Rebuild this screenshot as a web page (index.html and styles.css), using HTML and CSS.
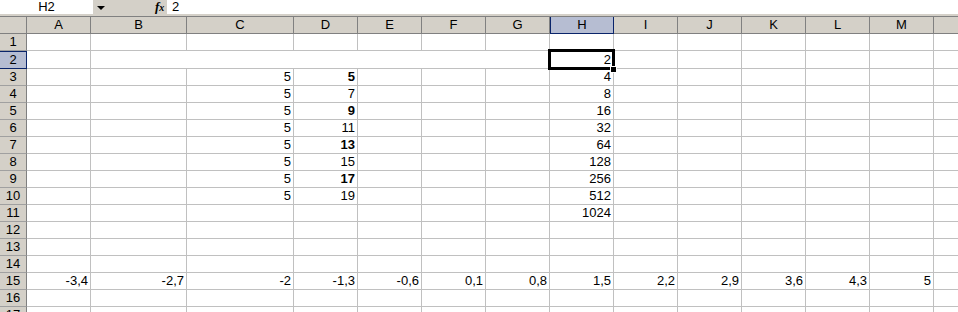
FILE: index.html
```html
<!DOCTYPE html>
<html lang="fr">
<head>
    <meta charset="UTF-8">
    <title>Feuil1</title>
    <link rel="stylesheet" href="styles.css">
</head>
<body>

    <!-- Barre de formule -->
    <div class="formula-bar">
        <div class="name-box">H2</div>
        <div class="name-drop"><span class="arrow"></span></div>
        <div class="fx">f<span>x</span></div>
        <div class="formula">2</div>
    </div>

    <table class="grid">
        <colgroup>
            <col class="c-hdr">
            <col class="c-std">
            <col class="c-b">
            <col class="c-c">
            <col class="c-std"><col class="c-std"><col class="c-std"><col class="c-std">
            <col class="c-std"><col class="c-std"><col class="c-std"><col class="c-std">
            <col class="c-std"><col class="c-std"><col class="c-std">
        </colgroup>
        <thead>
            <tr>
                <th class="corner"></th>
                <th>A</th><th>B</th><th>C</th><th>D</th><th>E</th><th>F</th><th>G</th>
                <th class="sel">H</th>
                <th>I</th><th>J</th><th>K</th><th>L</th><th>M</th><th></th>
            </tr>
        </thead>
        <tbody>
            <tr><th>1</th><td></td><td></td><td></td><td></td><td></td><td></td><td></td><td></td><td></td><td></td><td></td><td></td><td></td><td></td></tr>
            <tr><th class="sel">2</th><td></td><td colspan="6"></td><td class="cur">2</td><td></td><td></td><td></td><td></td><td></td><td></td></tr>
            <tr><th>3</th><td></td><td></td><td>5</td><td class="b">5</td><td></td><td></td><td></td><td>4</td><td></td><td></td><td></td><td></td><td></td><td></td></tr>
            <tr><th>4</th><td></td><td></td><td>5</td><td>7</td><td></td><td></td><td></td><td>8</td><td></td><td></td><td></td><td></td><td></td><td></td></tr>
            <tr><th>5</th><td></td><td></td><td>5</td><td class="b">9</td><td></td><td></td><td></td><td>16</td><td></td><td></td><td></td><td></td><td></td><td></td></tr>
            <tr><th>6</th><td></td><td></td><td>5</td><td>11</td><td></td><td></td><td></td><td>32</td><td></td><td></td><td></td><td></td><td></td><td></td></tr>
            <tr><th>7</th><td></td><td></td><td>5</td><td class="b">13</td><td></td><td></td><td></td><td>64</td><td></td><td></td><td></td><td></td><td></td><td></td></tr>
            <tr><th>8</th><td></td><td></td><td>5</td><td>15</td><td></td><td></td><td></td><td>128</td><td></td><td></td><td></td><td></td><td></td><td></td></tr>
            <tr><th>9</th><td></td><td></td><td>5</td><td class="b">17</td><td></td><td></td><td></td><td>256</td><td></td><td></td><td></td><td></td><td></td><td></td></tr>
            <tr><th>10</th><td></td><td></td><td>5</td><td>19</td><td></td><td></td><td></td><td>512</td><td></td><td></td><td></td><td></td><td></td><td></td></tr>
            <tr><th>11</th><td></td><td></td><td></td><td></td><td></td><td></td><td></td><td>1024</td><td></td><td></td><td></td><td></td><td></td><td></td></tr>
            <tr><th>12</th><td></td><td></td><td></td><td></td><td></td><td></td><td></td><td></td><td></td><td></td><td></td><td></td><td></td><td></td></tr>
            <tr><th>13</th><td></td><td></td><td></td><td></td><td></td><td></td><td></td><td></td><td></td><td></td><td></td><td></td><td></td><td></td></tr>
            <tr><th>14</th><td></td><td></td><td></td><td></td><td></td><td></td><td></td><td></td><td></td><td></td><td></td><td></td><td></td><td></td></tr>
            <tr><th>15</th><td>-3,4</td><td>-2,7</td><td>-2</td><td>-1,3</td><td>-0,6</td><td>0,1</td><td>0,8</td><td>1,5</td><td>2,2</td><td>2,9</td><td>3,6</td><td>4,3</td><td>5</td><td></td></tr>
            <tr><th>16</th><td></td><td></td><td></td><td></td><td></td><td></td><td></td><td></td><td></td><td></td><td></td><td></td><td></td><td></td></tr>
            <tr><th>17</th><td></td><td></td><td></td><td></td><td></td><td></td><td></td><td></td><td></td><td></td><td></td><td></td><td></td><td></td></tr>
        </tbody>
    </table>

</body>
</html>
```

FILE: styles.css
```css
/* Page : une feuille de calcul classique */
body {
    margin: 0;
    width: 958px;
    height: 312px;
    overflow: hidden;
    background: #fff;
    font-family: "Liberation Sans", Arial, sans-serif;
    font-size: 13px;
    color: #000;
}

/* Barre de formule */
.formula-bar {
    display: flex;
    height: 14px;
    line-height: 14px;
    padding-bottom: 2px;
    background: #d4d0c8;
    border-bottom: 1px solid #808080;
}

.name-box {
    width: 93px;
    background: #fff;
    text-align: center;
}

.name-drop {
    width: 62px;
    position: relative;
}

.arrow {
    position: absolute;
    left: 4px;
    top: 6px;
    border-left: 4px solid transparent;
    border-right: 4px solid transparent;
    border-top: 4px solid #000;
}

.fx {
    width: 12px;
    font-family: "Liberation Serif", serif;
    font-style: italic;
    font-weight: bold;
    font-size: 13px;
}

.fx span {
    font-size: 10px;
}

.formula {
    flex: 1;
    background: #fff;
    padding-left: 5px;
}

/* Grille */
.grid {
    border-collapse: separate;
    border-spacing: 0;
    table-layout: fixed;
    width: 998px;
}

.c-hdr { width: 27px; }
.c-std { width: 64px; }
.c-b { width: 96px; }
.c-c { width: 107px; }

.grid tr {
    height: 17px;
}

.grid th,
.grid td {
    padding: 0 2px;
    line-height: 16px;
    white-space: nowrap;
    overflow: hidden;
}

.grid td {
    text-align: right;
    border-right: 1px solid #c0c0c0;
    border-bottom: 1px solid #c0c0c0;
}

.grid th {
    font-weight: normal;
    text-align: center;
    background: #d4d0c8;
    border-right: 1px solid #808080;
    border-bottom: 1px solid #808080;
}

.grid tbody th {
    padding: 0;
    border-bottom-color: #a0a0a0;
}

/* En-têtes de la cellule active */
.grid th.sel {
    background: #b6bdd2;
    border-color: #0a246a;
}

.grid thead th.sel {
    border-left: 1px solid #0a246a;
}

.grid tbody th.sel {
    border-top: 1px solid #0a246a;
    border-bottom-color: #0a246a;
}

.b {
    font-weight: bold;
}

/* Cellule active H2 */
.cur {
    position: relative;
    overflow: visible !important;
}

.cur::after {
    content: "";
    position: absolute;
    top: -2px;
    left: -2px;
    right: -2px;
    bottom: -2px;
    border: 3px solid #000;
}

.cur::before {
    content: "";
    position: absolute;
    right: -4px;
    bottom: -5px;
    width: 5px;
    height: 5px;
    background: #000;
    border: 1px solid #fff;
    z-index: 1;
}
```
